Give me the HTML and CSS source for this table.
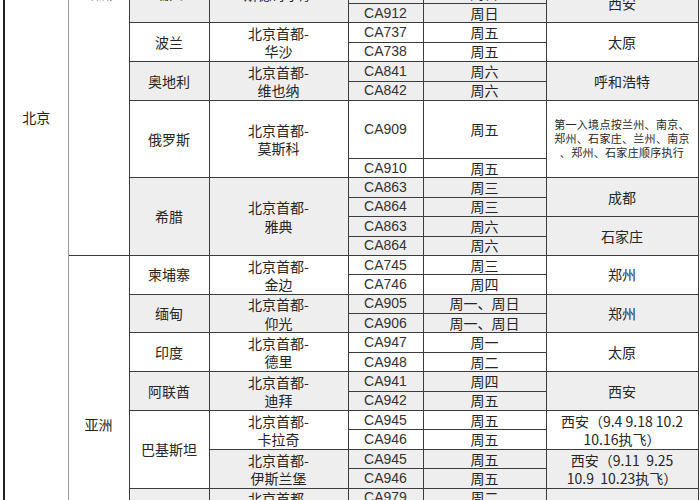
FILE: index.html
```html
<!DOCTYPE html>
<html lang="zh">
<head>
<meta charset="utf-8">
<title>航班表</title>
<link rel="stylesheet" href="styles.css">
</head>
<body>
<div class="wrap">
<table class="sched">
<colgroup>
<col class="w1"><col class="w2"><col class="w3"><col class="w4"><col class="w5"><col class="w6"><col class="w7">
</colgroup>
<tbody>
<tr>
<td rowspan="26" class="city-main">北京</td>
<td rowspan="12" class="region top"><div>欧洲</div></td>
<td rowspan="2" class="g top"><div>瑞典</div></td>
<td rowspan="2" class="g top two"><div class="cut">北京首都-<br>斯德哥尔摩</div></td>
<td class="g fl">CA911</td><td class="g">周日</td>
<td rowspan="2" class="g">西安</td>
</tr>
<tr><td class="g fl">CA912</td><td class="g">周日</td></tr>

<tr>
<td rowspan="2">波兰</td><td rowspan="2" class="two">北京首都-<br>华沙</td>
<td class="fl">CA737</td><td>周五</td><td rowspan="2">太原</td>
</tr>
<tr><td class="fl">CA738</td><td>周五</td></tr>

<tr>
<td rowspan="2" class="g">奥地利</td><td rowspan="2" class="g two">北京首都-<br>维也纳</td>
<td class="g fl">CA841</td><td class="g">周六</td><td rowspan="2" class="g">呼和浩特</td>
</tr>
<tr><td class="g fl">CA842</td><td class="g">周六</td></tr>

<tr class="tall">
<td rowspan="2">俄罗斯</td><td rowspan="2" class="two">北京首都-<br>莫斯科</td>
<td class="fl">CA909</td><td>周五</td>
<td rowspan="2" class="note">第一入境点按兰州、南京、<br>郑州、石家庄、兰州、南京<br>、郑州、石家庄顺序执行</td>
</tr>
<tr><td class="fl">CA910</td><td>周五</td></tr>

<tr>
<td rowspan="4" class="g">希腊</td><td rowspan="4" class="g two">北京首都-<br>雅典</td>
<td class="g fl">CA863</td><td class="g">周三</td><td rowspan="2" class="g">成都</td>
</tr>
<tr><td class="g fl">CA864</td><td class="g">周三</td></tr>
<tr><td class="g fl">CA863</td><td class="g">周六</td><td rowspan="2" class="g">石家庄</td></tr>
<tr><td class="g fl">CA864</td><td class="g">周六</td></tr>

<tr>
<td rowspan="14" class="region asia">亚洲</td>
<td rowspan="2">柬埔寨</td><td rowspan="2" class="two">北京首都-<br>金边</td>
<td class="fl">CA745</td><td>周三</td><td rowspan="2">郑州</td>
</tr>
<tr><td class="fl">CA746</td><td>周四</td></tr>

<tr>
<td rowspan="2" class="g">缅甸</td><td rowspan="2" class="g two">北京首都-<br>仰光</td>
<td class="g fl">CA905</td><td class="g">周一、周日</td><td rowspan="2" class="g">郑州</td>
</tr>
<tr><td class="g fl">CA906</td><td class="g">周一、周日</td></tr>

<tr>
<td rowspan="2">印度</td><td rowspan="2" class="two">北京首都-<br>德里</td>
<td class="fl">CA947</td><td>周一</td><td rowspan="2">太原</td>
</tr>
<tr><td class="fl">CA948</td><td>周二</td></tr>

<tr>
<td rowspan="2" class="g">阿联酋</td><td rowspan="2" class="g two">北京首都-<br>迪拜</td>
<td class="g fl">CA941</td><td class="g">周四</td><td rowspan="2" class="g">西安</td>
</tr>
<tr><td class="g fl">CA942</td><td class="g">周五</td></tr>

<tr>
<td rowspan="4">巴基斯坦</td><td rowspan="2" class="two">北京首都-<br>卡拉奇</td>
<td class="fl">CA945</td><td>周五</td><td rowspan="2" class="two">西安（9.4 9.18 10.2<br>10.16执飞）</td>
</tr>
<tr><td class="fl">CA946</td><td>周五</td></tr>
<tr>
<td rowspan="2" class="g two">北京首都-<br>伊斯兰堡</td>
<td class="g fl">CA945</td><td class="g">周五</td><td rowspan="2" class="g two">西安（9.11&nbsp;&nbsp;9.25<br>10.9&nbsp;&nbsp;10.23执飞）</td>
</tr>
<tr><td class="g fl">CA946</td><td class="g">周五</td></tr>

<tr>
<td rowspan="2" class="g">泰国</td><td rowspan="2" class="g two">北京首都-<br>曼谷</td>
<td class="g fl">CA979</td><td class="g">周二</td><td rowspan="2" class="g">宁波</td>
</tr>
<tr><td class="g fl">CA980</td><td class="g">周二</td></tr>
</tbody>
</table>
</div>
</body>
</html>
```

FILE: styles.css
```css
html, body {
  margin: 0;
  padding: 0;
  background: #ffffff;
}

.wrap {
  width: 700px;
  height: 500px;
  overflow: hidden;
  padding-left: 3px;
  box-sizing: border-box;
}

.sched {
  border-collapse: collapse;
  table-layout: fixed;
  width: 695px;
  margin-top: -16.4px;
  font-family: "Noto Sans CJK SC", "Noto Sans", sans-serif;
  font-size: 14px;
  color: #262626;
  border-left: 2px solid #222;
}

.w1 { width: 64px; }
.w2 { width: 61px; }
.w3 { width: 80px; }
.w4 { width: 139px; }
.w5 { width: 75px; }
.w6 { width: 123px; }
.w7 { width: 152px; }

.sched tr {
  height: 19.4px;
}

.sched tr.tall {
  height: 58px;
}

.sched td {
  border: 1px solid #3c3c3c;
  padding: 0;
  text-align: center;
  vertical-align: middle;
  line-height: 17px;
  white-space: nowrap;
  background: #ffffff;
}

.sched td.g {
  background: #eeeeee;
}

.sched td.two {
  line-height: 18.2px;
}

.sched td.fl {
  font-family: "Liberation Sans", Arial, sans-serif;
  font-size: 14px;
  color: #333;
}

.sched td.city-main {
  vertical-align: top;
  padding-top: 124px;
  border-right-color: #9a9a9a;
}

.sched td.region {
  vertical-align: top;
  border-left-color: #9a9a9a;
}

.sched td.top {
  vertical-align: top;
}

.sched td.asia {
  padding-top: 160px;
}

.cut {
  margin-top: -18.2px;
}

.sched td.note {
  font-size: 11px;
  line-height: 14px;
  letter-spacing: 0.3px;
  padding-bottom: 2px;
}
```
